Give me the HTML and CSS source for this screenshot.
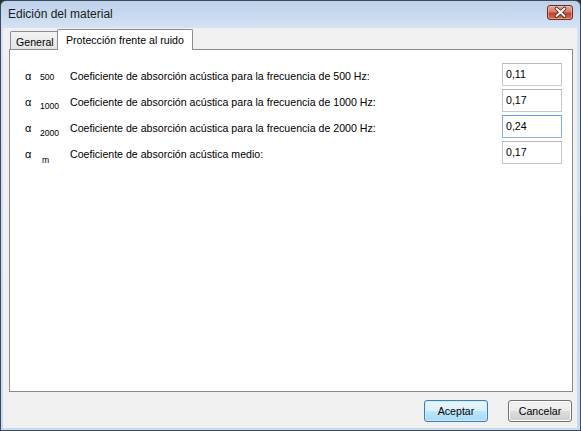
FILE: index.html
```html
<!DOCTYPE html>
<html lang="es">
<head>
<meta charset="utf-8">
<title>Edición del material</title>
<link rel="stylesheet" href="styles.css">
</head>
<body>
<div class="window">
  <div class="titlebar">
    <span class="title">Edición del material</span>
    <button class="close" aria-label="Cerrar">
      <svg width="27" height="15" viewBox="0 0 27 15">
        <path d="M9.5 3.5 L17.5 11 M17.5 3.5 L9.5 11" stroke="#4a1d14" stroke-width="3.6" stroke-linecap="round" fill="none"/>
        <path d="M9.5 3.5 L17.5 11 M17.5 3.5 L9.5 11" stroke="#ffffff" stroke-width="2" stroke-linecap="round" fill="none"/>
      </svg>
    </button>
  </div>
  <div class="client">
    <div class="tabs">
      <div class="tabstrip">
        <div class="tab">General</div>
        <div class="tab active">Protección frente al ruido</div>
      </div>
      <div class="panel">
        <div class="row">
          <span class="sym sym-500"><span class="a">α</span><span class="s">500</span></span>
          <span class="label">Coeficiente de absorción acústica para la frecuencia de 500 Hz:</span>
          <input class="field" type="text" value="0,11">
        </div>
        <div class="row">
          <span class="sym sym-1000"><span class="a">α</span><span class="s">1000</span></span>
          <span class="label">Coeficiente de absorción acústica para la frecuencia de 1000 Hz:</span>
          <input class="field" type="text" value="0,17">
        </div>
        <div class="row">
          <span class="sym sym-2000"><span class="a">α</span><span class="s">2000</span></span>
          <span class="label">Coeficiente de absorción acústica para la frecuencia de 2000 Hz:</span>
          <input class="field focus" type="text" value="0,24">
        </div>
        <div class="row">
          <span class="sym sym-m"><span class="a">α</span><span class="s">m</span></span>
          <span class="label">Coeficiente de absorción acústica medio:</span>
          <input class="field" type="text" value="0,17">
        </div>
      </div>
    </div>
    <div class="buttons">
      <button class="btn default">Aceptar</button>
      <button class="btn">Cancelar</button>
    </div>
  </div>
</div>
</body>
</html>
```

FILE: styles.css
```css
html, body {
  margin: 0;
  padding: 0;
  background: #2a2f2a;
}

body {
  font-family: "Liberation Sans", Arial, sans-serif;
  font-size: 10.6px;
  color: #000;
}

.window {
  width: 581px;
  height: 431px;
  box-sizing: border-box;
  border: 1px solid #3b4a5c;
  border-radius: 6px 6px 0 0;
  background: linear-gradient(#bdd1ea 0, #d4e2f3 27px, #c8daef 100%);
  display: flex;
  flex-direction: column;
  padding: 0 3px 2px 2px;
  overflow: hidden;
}

.titlebar {
  height: 27px;
  flex: none;
  display: flex;
  align-items: flex-start;
  justify-content: space-between;
  padding-left: 5px;
}

.title {
  font-size: 12px;
  line-height: 14px;
  padding-top: 6px;
  color: #1b1b1b;
}

.close {
  width: 26px;
  height: 15px;
  margin-top: 4px;
  margin-right: 4px;
  padding: 0;
  border: 1px solid #6d2a1e;
  border-radius: 3px;
  background: linear-gradient(#e7a596 0, #d77a66 45%, #c2432c 55%, #d3694f 100%);
  box-shadow: inset 0 0 0 1px rgba(255, 220, 210, 0.45);
  display: flex;
  align-items: center;
  justify-content: center;
  box-sizing: border-box;
}

.close svg {
  display: block;
  flex: none;
}

.client {
  flex: 1;
  background: #f0f0f0;
  display: flex;
  flex-direction: column;
  padding: 1px 4px 6px 6px;
}

.tabs {
  flex: 1;
  display: flex;
  flex-direction: column;
}

.tabstrip {
  height: 21px;
  flex: none;
  display: flex;
  align-items: flex-end;
  padding-left: 1px;
  margin-bottom: -1px;
  position: relative;
  z-index: 1;
}

.tab {
  box-sizing: border-box;
  border: 1px solid #898c95;
  border-bottom: none;
  line-height: 13px;
  padding: 4px 5px 0 5px;
  height: 18px;
  width: 49px;
  margin-bottom: 1px;
  background: linear-gradient(#f3f3f3, #e4e4e4);
  border-radius: 2px 2px 0 0;
  white-space: nowrap;
}

.tab.active {
  height: 21px;
  width: 136px;
  margin-left: -2px;
  margin-bottom: 0;
  padding: 4px 8px 0 8px;
  background: #ffffff;
}

.panel {
  flex: 1;
  background: #ffffff;
  border: 1px solid #898c95;
  padding: 13px 10px 0 15px;
}

.row {
  height: 26px;
  display: flex;
  align-items: flex-start;
}

.sym {
  width: 45px;
  flex: none;
  margin-top: 7px;
  line-height: 13px;
  white-space: nowrap;
}

.sym .a {
  display: inline-block;
  width: 15px;
  font-size: 11px;
}

.sym .s {
  font-size: 8.6px;
}

.sym-1000 .a { vertical-align: 2px; }
.sym-1000 .s { vertical-align: -1px; }
.sym-2000 .a { vertical-align: 1px; }
.sym-2000 .s { vertical-align: -3px; }
.sym-m .a { vertical-align: 2px; }
.sym-m .s { vertical-align: -3px; padding-left: 2px; }

.label {
  flex: 1;
  margin-top: 7px;
  line-height: 13px;
  white-space: nowrap;
}

.field {
  width: 60px;
  height: 23px;
  box-sizing: border-box;
  border: 1px solid #c6c8cc;
  border-top-color: #b5b7bc;
  padding: 3px 3px 5px 3px;
  margin: 0;
  font-family: "Liberation Sans", Arial, sans-serif;
  font-size: 10.6px;
  line-height: 13px;
  color: #000;
  background: #fff;
  outline: none;
}

.field.focus {
  border-color: #7eb4ea;
  border-top-color: #569de5;
}

.buttons {
  flex: none;
  height: 22px;
  margin-top: 8px;
  display: flex;
  justify-content: flex-end;
  gap: 20px;
  padding-right: 1px;
}

.btn {
  width: 64px;
  height: 22px;
  box-sizing: border-box;
  border: 1px solid #707070;
  border-radius: 3px;
  background: linear-gradient(#f2f2f2 0, #ebebeb 49%, #dddddd 51%, #cfcfcf 100%);
  box-shadow: inset 0 0 0 1px #fcfcfc;
  font-family: "Liberation Sans", Arial, sans-serif;
  font-size: 10.6px;
  color: #000;
  padding: 0;
}

.btn.default {
  border-color: #3c7fb1;
  background: linear-gradient(#eaf6fd 0, #d9f0fc 49%, #bee6fd 51%, #a7d9f5 100%);
  box-shadow: inset 0 0 0 1px #cdeafb;
}
```
